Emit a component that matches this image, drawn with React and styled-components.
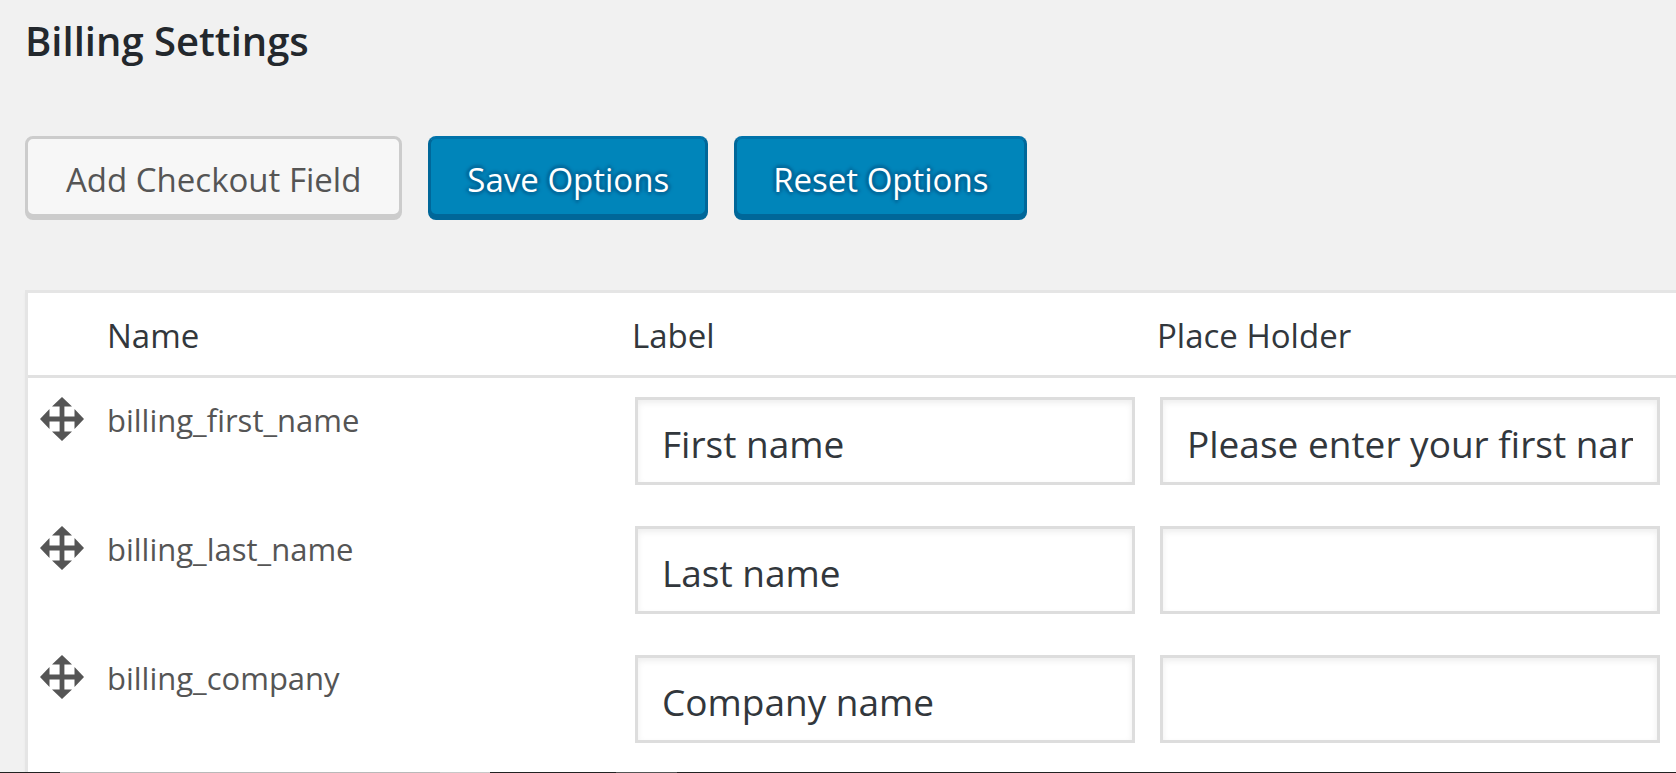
import React from "react";
import styled, { createGlobalStyle } from "styled-components";

const GlobalStyle = createGlobalStyle`
  *, *::before, *::after { box-sizing: border-box; }
  html, body { margin: 0; background: #f1f1f1; }
  body, button, input { font-family: "Segoe UI", "Open Sans", "Noto Sans", sans-serif; }
`;

const Screen = styled.div`
  display: flex;
  flex-direction: column;
  height: 100vh;
`;

const Content = styled.main`
  flex: 1;
  min-height: 0;
  overflow: hidden;
  padding: 11px 0 0 25px;
`;

const Title = styled.h1`
  margin: 0 0 65px;
  font-size: 40px;
  line-height: 60px;
  font-weight: 600;
  color: #23282d;
`;

const Toolbar = styled.div`
  display: flex;
  gap: 26px;
  margin-bottom: 73px;
`;

const Button = styled.button`
  height: 81px;
  padding: 6px ${(p) => (p.$primary ? "36px" : "38px")} 0;
  border: 3px solid;
  border-color: ${(p) => (p.$primary ? "#0073aa #006799 #006799" : "#ccc")};
  border-radius: 8px;
  background: ${(p) => (p.$primary ? "#0085ba" : "#f7f7f7")};
  box-shadow: 0 3px 0 ${(p) => (p.$primary ? "#006799" : "#ccc")};
  color: ${(p) => (p.$primary ? "#fff" : "#555")};
  text-shadow: ${(p) =>
    p.$primary ? "0 -3px 3px #006799, 3px 0 3px #006799, 0 3px 3px #006799, -3px 0 3px #006799" : "none"};
  font-size: 33px;
  line-height: 48px;
  white-space: nowrap;
  cursor: pointer;
`;

const Panel = styled.section`
  margin-right: -6px;
  padding-bottom: 24px;
  border: 3px solid #e5e5e5;
  border-right: 0;
  background: #fff;
  box-shadow: 0 3px 3px rgba(0, 0, 0, 0.04);
`;

const Table = styled.table`
  width: 100%;
  table-layout: fixed;
  border-collapse: separate;
  border-spacing: 0;
`;

const HeadCell = styled.th`
  width: ${(p) => (p.$narrow ? "79px" : "auto")};
  height: 85px;
  padding: 4px 0 0;
  border-bottom: 3px solid #e1e1e1;
  font-size: 33px;
  line-height: 48px;
  font-weight: 400;
  text-align: left;
  color: #32373c;
`;

const Cell = styled.td`
  padding: 19px 0 22px;
  vertical-align: top;
`;

const HandleCell = styled(Cell)`
  padding-left: 12px;
`;

const NameCell = styled(Cell)`
  font-size: 31px;
  line-height: 46px;
  color: #555;
`;

const FieldCell = styled(Cell)`
  padding-left: 3px;
  padding-right: 22px;
`;

const Handle = styled.svg`
  display: block;
  width: 44px;
  height: 44px;
  fill: #555;
  cursor: move;
`;

const TextField = styled.input`
  display: block;
  width: 100%;
  height: 88px;
  padding: 5px 24px 0;
  border: 3px solid #ddd;
  border-radius: 0;
  background: #fff;
  box-shadow: inset 0 3px 6px rgba(0, 0, 0, 0.07);
  color: #32373c;
  font-size: 37px;
  outline: none;
`;

const Taskbar = styled.footer`
  display: flex;
  flex: none;
  height: 1px;
  background: #222;
`;

const TaskbarItem = styled.div`
  width: ${(p) => p.$width}px;
  background: ${(p) => p.$color};
`;

const fields = [
  { name: "billing_first_name", label: "First name", placeholder: "Please enter your first name" },
  { name: "billing_last_name", label: "Last name", placeholder: "" },
  { name: "billing_company", label: "Company name", placeholder: "" },
];

const MoveIcon = () => (
  <Handle viewBox="0 0 44 44" aria-hidden="true">
    <path d="M22 0L32 9.5H24.4V19.6H34.5V12L44 22L34.5 32V24.4H24.4V34.5H32L22 44L12 34.5H19.6V24.4H9.5V32L0 22L9.5 12V19.6H19.6V9.5H12Z" />
  </Handle>
);

export default function App() {
  return (
    <Screen>
      <GlobalStyle />
      <Content>
        <Title>Billing Settings</Title>
        <Toolbar>
          <Button type="button">Add Checkout Field</Button>
          <Button type="button" $primary>Save Options</Button>
          <Button type="button" $primary>Reset Options</Button>
        </Toolbar>
        <Panel>
          <Table>
            <thead>
              <tr>
                <HeadCell $narrow />
                <HeadCell scope="col">Name</HeadCell>
                <HeadCell scope="col">Label</HeadCell>
                <HeadCell scope="col">Place Holder</HeadCell>
              </tr>
            </thead>
            <tbody>
              {fields.map((f) => (
                <tr key={f.name}>
                  <HandleCell><MoveIcon /></HandleCell>
                  <NameCell>{f.name}</NameCell>
                  <FieldCell>
                    <TextField type="text" aria-label={`${f.name} label`} defaultValue={f.label} />
                  </FieldCell>
                  <FieldCell>
                    <TextField type="text" aria-label={`${f.name} placeholder`} defaultValue={f.placeholder} />
                  </FieldCell>
                </tr>
              ))}
            </tbody>
          </Table>
        </Panel>
      </Content>
      <Taskbar>
        <TaskbarItem $width={60} $color="#222" />
        <TaskbarItem $width={380} $color="#b9b9b9" />
        <TaskbarItem $width={50} $color="#c8c8c8" />
        <TaskbarItem $width={126} $color="#222" />
        <TaskbarItem $width={61} $color="#555" />
      </Taskbar>
    </Screen>
  );
}
